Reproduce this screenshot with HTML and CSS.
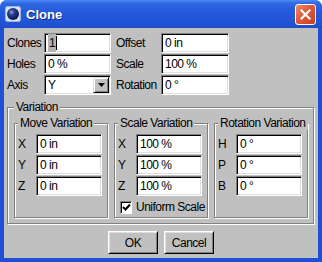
FILE: index.html
```html
<!DOCTYPE html>
<html lang="en">
<head>
  <meta charset="UTF-8" />
  <title>Clone</title>
  <link rel="stylesheet" href="styles.css">
</head>
<body>
  <div class="window">
    <div class="titlebar">
      <svg class="app-icon" width="16" height="16" viewBox="0 0 16 16">
        <defs>
          <radialGradient id="ball" cx="0.38" cy="0.35" r="0.7">
            <stop offset="0" stop-color="#8fa4d8" />
            <stop offset="0.35" stop-color="#2a3d8f" />
            <stop offset="1" stop-color="#0b1240" />
          </radialGradient>
        </defs>
        <rect x="0.5" y="0.5" width="15" height="15" rx="2" fill="#d7e1f3" stroke="#9db2de" />
        <circle cx="8" cy="8" r="6" fill="url(#ball)" />
      </svg>
      <span class="title">Clone</span>
      <div class="close">
        <svg width="11" height="11" viewBox="0 0 11 11">
          <path d="M1.5 1.5 L9.5 9.5 M9.5 1.5 L1.5 9.5" stroke="#fff" stroke-width="2.2" stroke-linecap="square" />
        </svg>
      </div>
    </div>

    <div class="client">
      <div class="params">
        <label>Clones</label>
        <div class="field"><span class="sel">1</span><span class="caret"></span></div>
        <label class="label2">Offset</label>
        <div class="field">0 in</div>

        <label>Holes</label>
        <div class="field">0 %</div>
        <label class="label2">Scale</label>
        <div class="field">100 %</div>

        <label>Axis</label>
        <div class="field combo">
          <span>Y</span>
          <span class="drop">
            <svg width="7" height="4" viewBox="0 0 7 4"><path d="M0 0 H7 L3.5 4 Z" fill="#000" /></svg>
          </span>
        </div>
        <label class="label2">Rotation</label>
        <div class="field">0 °</div>
      </div>

      <fieldset class="group outer">
        <legend>Variation</legend>
        <div class="groups">
          <fieldset class="group inner">
            <legend>Move Variation</legend>
            <div class="axes">
              <label>X</label><div class="field">0 in</div>
              <label>Y</label><div class="field">0 in</div>
              <label>Z</label><div class="field">0 in</div>
            </div>
          </fieldset>

          <fieldset class="group inner">
            <legend>Scale Variation</legend>
            <div class="axes">
              <label>X</label><div class="field">100 %</div>
              <label>Y</label><div class="field">100 %</div>
              <label>Z</label><div class="field">100 %</div>
            </div>
            <div class="check-row">
              <span class="checkbox">
                <svg width="9" height="9" viewBox="0 0 9 9"><path d="M1 4 L3.5 6.5 L8 1.5" stroke="#000" stroke-width="2" fill="none" /></svg>
              </span>
              <span>Uniform Scale</span>
            </div>
          </fieldset>

          <fieldset class="group inner">
            <legend>Rotation Variation</legend>
            <div class="axes">
              <label>H</label><div class="field">0 °</div>
              <label>P</label><div class="field">0 °</div>
              <label>B</label><div class="field">0 °</div>
            </div>
          </fieldset>
        </div>
      </fieldset>

      <div class="buttons">
        <button>OK</button>
        <button>Cancel</button>
      </div>
    </div>
  </div>
</body>
</html>
```

FILE: styles.css
```css
body {
  margin: 0;
  font-family: "Liberation Sans", Arial, sans-serif;
  font-size: 12px;
  letter-spacing: -0.5px;
  color: #000;
}
.window {
  width: 322px;
  height: 262px;
  box-sizing: border-box;
  padding: 0 4px 4px;
  background: #1f4fd3;
  border-radius: 7px 7px 0 0;
  display: flex;
  flex-direction: column;
  overflow: hidden;
}
.titlebar {
  height: 28px;
  margin: 0 -4px;
  padding: 0 5px;
  display: flex;
  align-items: center;
  background: linear-gradient(#4f8cf6 0%, #2f68e3 12%, #2459d9 45%, #2155d6 80%, #1c4cc8 100%);
}
.app-icon {
  flex: none;
}
.title {
  margin-left: 5px;
  color: #fff;
  font-weight: bold;
  font-size: 13px;
  letter-spacing: 0;
  text-shadow: 1px 1px #0f2f8c;
  flex: 1;
}
.close {
  width: 21px;
  height: 21px;
  box-sizing: border-box;
  border: 1px solid #fff;
  border-radius: 3px;
  background: linear-gradient(135deg, #f08a66 0%, #e0583a 45%, #c9401f 100%);
  display: flex;
  align-items: center;
  justify-content: center;
  margin-right: 1px;
}
.client {
  flex: 1;
  background: #c0c0c0;
  padding: 5px 0 0 3px;
}
.params {
  display: grid;
  grid-template-columns: 37px 67px 50px 68px;
  grid-auto-rows: 20px;
  row-gap: 1px;
  align-items: center;
}
.label2 {
  padding-left: 5px;
}
.field {
  height: 20px;
  box-sizing: border-box;
  background: #fff;
  border: 1px solid;
  border-color: #808080 #fff #fff #808080;
  box-shadow: inset 1px 1px #000, inset -1px -1px #dfdfdf;
  padding: 0 2px 0 3px;
  line-height: 18px;
  white-space: nowrap;
  display: flex;
  align-items: center;
}
.sel {
  background: #b4b4b4;
  padding: 0 1px;
}
.caret {
  width: 1px;
  height: 14px;
  background: #000;
}
.combo {
  justify-content: space-between;
  padding-right: 1px;
}
.drop {
  width: 16px;
  height: 16px;
  box-sizing: border-box;
  background: #c0c0c0;
  border: 1px solid;
  border-color: #dfdfdf #000 #000 #dfdfdf;
  box-shadow: inset 1px 1px #fff, inset -1px -1px #808080;
  display: flex;
  align-items: center;
  justify-content: center;
}
.group {
  margin: 0;
  border: 1px solid #808080;
  box-shadow: inset 1px 1px #fff, 1px 1px #fff;
  min-inline-size: 0;
}
.group legend {
  padding: 0 2px;
  line-height: 13px;
  background: #c0c0c0;
  white-space: nowrap;
}
.outer {
  width: 307px;
  box-sizing: border-box;
  margin-top: 6px;
  padding: 3px 5px 5px 6px;
}
.groups {
  display: flex;
  gap: 6px;
}
.inner {
  width: 94px;
  box-sizing: border-box;
  padding: 4px 5px 3px 3px;
}
.axes {
  display: grid;
  grid-template-columns: 18px 66px;
  grid-auto-rows: 20px;
  row-gap: 1px;
  align-items: center;
}
.check-row {
  display: flex;
  align-items: center;
  gap: 4px;
  margin: 4px 0 0 2px;
  height: 14px;
  white-space: nowrap;
}
.checkbox {
  width: 13px;
  height: 13px;
  box-sizing: border-box;
  background: #fff;
  border: 1px solid;
  border-color: #808080 #fff #fff #808080;
  box-shadow: inset 1px 1px #000;
  display: flex;
  align-items: center;
  justify-content: center;
  padding: 1px 0 0 1px;
}
.buttons {
  display: flex;
  justify-content: center;
  gap: 6px;
  margin: 7px 0 0 -3px;
}
.buttons button {
  width: 50px;
  height: 23px;
  padding: 0;
  font: inherit;
  letter-spacing: inherit;
  background: #c0c0c0;
  border: 1px solid;
  border-color: #fff #000 #000 #fff;
  box-shadow: inset 1px 1px #dfdfdf, inset -1px -1px #808080;
}
```
